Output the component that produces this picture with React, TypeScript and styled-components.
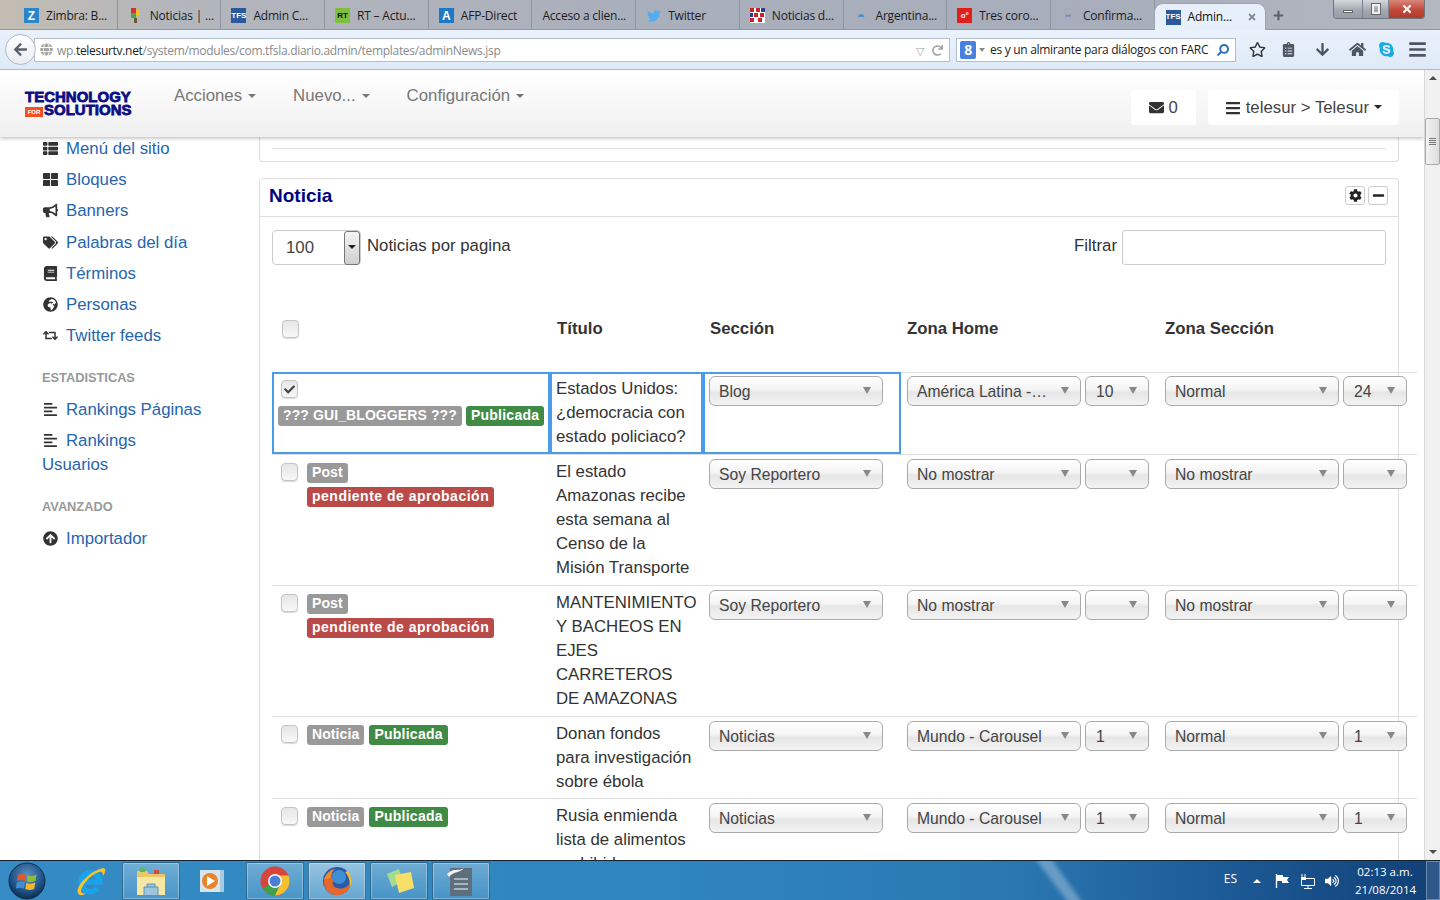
import React from "react";
import styled, { createGlobalStyle } from "styled-components";
import {
  FaThList,
  FaThLarge,
  FaBullhorn,
  FaTags,
  FaBook,
  FaGlobeAfrica,
  FaRetweet,
  FaAlignLeft,
  FaArrowCircleUp,
  FaEnvelope,
  FaCog,
  FaMinus,
  FaCheck,
  FaTwitter,
  FaRegStar,
  FaClipboardList,
  FaArrowDown,
  FaHome,
  FaSkype,
  FaBars,
  FaSearch,
  FaGlobe,
  FaArrowLeft,
  FaRedo,
  FaTimes,
  FaPlus,
  FaVolumeUp,
} from "react-icons/fa";

const GlobalStyle = createGlobalStyle`
  html, body {
    margin: 0;
    height: 100%;
    overflow: hidden;
    background: #fff;
  }
  * { box-sizing: border-box; }
`;

const Screen = styled.div`
  width: 1440px;
  height: 900px;
  display: flex;
  flex-direction: column;
  overflow: hidden;
  font-family: "Liberation Sans", Arial, sans-serif;
  font-size: 16.8px;
  line-height: 24px;
  color: #333;
`;

/* ---- browser chrome ---- */

const TabStrip = styled.div`
  height: 30px;
  flex: none;
  display: flex;
  padding-left: 14px;
  background: linear-gradient(90deg, #c3bdb2 0%, #b4b6bd 12%, #a9afbb 45%, #a7adba 75%, #b3b7c0 100%);
  border-bottom: 1px solid #8e9aaa;
  font-family: "Open Sans", "Noto Sans", sans-serif;
  font-size: 12px;
  letter-spacing: -0.2px;
`;

const Tab = styled.div`
  width: 103.7px;
  height: 29px;
  flex: none;
  display: flex;
  align-items: center;
  gap: 7px;
  padding: 2px 0 0 10px;
  color: #1c1c1c;
  white-space: nowrap;
  border-right: 1px solid #8f95a0;
`;

const ActiveTab = styled.div`
  width: 112px;
  height: 27px;
  margin: 3px 0 0 -1px;
  flex: none;
  display: flex;
  align-items: center;
  gap: 7px;
  padding: 0 0 0 11px;
  color: #111;
  background: #e6effa;
  border-radius: 9px 9px 0 0;
  border: 1px solid #98a2b0;
  border-bottom: none;
  position: relative;
  z-index: 1;
`;

const TabClose = styled.span`
  display: flex;
  margin-left: 8px;
  color: #7d8792;
  font-size: 10px;
`;

const NewTab = styled.span`
  display: flex;
  margin: 10px 0 0 7px;
  color: #59616d;
  font-size: 11px;
`;

const Favicon = styled.span<{ $bg: string; $fg?: string; $size?: number }>`
  width: 15px;
  height: 15px;
  flex: none;
  display: flex;
  align-items: center;
  justify-content: center;
  background: ${(p) => p.$bg};
  color: ${(p) => p.$fg || "#fff"};
  font-family: "Liberation Sans", sans-serif;
  font-size: ${(p) => p.$size || 8}px;
  line-height: 1;
  font-weight: 700;
  letter-spacing: 0;
`;

const BareIcon = styled.span<{ $color: string }>`
  width: 15px;
  height: 15px;
  flex: none;
  display: flex;
  align-items: center;
  justify-content: center;
  color: ${(p) => p.$color};
  font-size: 14px;
`;

const WindowControls = styled.div`
  margin-left: auto;
  margin-right: 15px;
  height: 19px;
  display: flex;
  border: 1px solid #6f7681;
  border-top: none;
  border-radius: 0 0 4px 4px;
  overflow: hidden;
`;

const WindowButton = styled.span<{ $w: number; $close?: boolean }>`
  width: ${(p) => p.$w}px;
  display: flex;
  align-items: center;
  justify-content: center;
  color: #f2f2f2;
  font-size: 12px;
  background: ${(p) =>
    p.$close
      ? "linear-gradient(#d9867b, #c14a3c 55%, #b5392e)"
      : "linear-gradient(#d5d8dd, #a4a9b2 55%, #969ca6)"};
  border-left: 1px solid #7d838d;
  &:first-child { border-left: none; }
`;

const MinGlyph = styled.i`
  width: 10px;
  height: 3px;
  margin-top: 5px;
  background: #f5f5f5;
  border: 1px solid #666;
`;

const RestoreGlyph = styled.i`
  width: 8px;
  height: 10px;
  background: transparent;
  border: 2px solid #f0f0f0;
  outline: 1px solid #666;
`;

const Toolbar = styled.div`
  height: 40px;
  flex: none;
  display: flex;
  align-items: center;
  padding-left: 5px;
  background: linear-gradient(#e9f1fb, #dfeaf8);
  border-bottom: 1px solid #a8bace;
  font-family: "Open Sans", "Noto Sans", sans-serif;
  font-size: 12px;
`;

const BackButton = styled.span`
  width: 31px;
  height: 31px;
  flex: none;
  display: flex;
  align-items: center;
  justify-content: center;
  border-radius: 50%;
  background: linear-gradient(#fff, #e8edf3);
  border: 1px solid #b0b8c2;
  color: #59616b;
  font-size: 15px;
  position: relative;
  z-index: 1;
`;

const UrlBar = styled.div`
  width: 916px;
  height: 24px;
  margin-left: -2px;
  flex: none;
  display: flex;
  align-items: center;
  padding: 2px 6px 0 5px;
  background: #fff;
  border: 1px solid #b5bfca;
  color: #8a8a8a;
  letter-spacing: -0.3px;
  white-space: pre;
`;

const UrlHost = styled.span`
  color: #1c1c1c;
`;

const UrlGlobe = styled.span`
  display: flex;
  margin: -2px 4px 0 0;
  color: #a5a5a5;
  font-size: 13px;
`;

const UrlEnd = styled.span`
  margin-left: auto;
  display: flex;
  align-items: center;
  gap: 8px;
  color: #9aa2ab;
  font-size: 11px;
`;

const SearchBar = styled.div`
  width: 280px;
  height: 24px;
  margin-left: 6px;
  flex: none;
  display: flex;
  align-items: center;
  background: #fff;
  border: 1px solid #b5bfca;
  padding-right: 6px;
  color: #222;
  white-space: pre;
  letter-spacing: -0.3px;
  overflow: hidden;
`;

const SearchEngine = styled.span`
  width: 16px;
  height: 18px;
  margin-left: 3px;
  flex: none;
  display: flex;
  align-items: center;
  justify-content: center;
  background: #4a80e0;
  color: #fff;
  border-radius: 2px;
  font-weight: 700;
  font-size: 14px;
`;

const SearchCaret = styled.span`
  width: 0;
  height: 0;
  margin: 0 5px 0 3px;
  border-left: 3px solid transparent;
  border-right: 3px solid transparent;
  border-top: 4px solid #8a8a8a;
`;

const SearchGlass = styled.span`
  margin-left: auto;
  display: flex;
  color: #2e6fc0;
  font-size: 12px;
  transform: scaleX(-1);
`;

const ToolIcons = styled.div`
  flex: 1;
  display: grid;
  grid-template-columns: 30px 30px 34px 36px 29px 32px;
  align-items: center;
  justify-items: end;
  color: #4e5660;
`;

const ToolIcon = styled.span<{ $color?: string; $size?: number }>`
  display: flex;
  color: ${(p) => p.$color || "inherit"};
  font-size: ${(p) => p.$size || 17}px;
`;

/* ---- page ---- */

const Viewport = styled.div`
  flex: 1;
  min-height: 0;
  display: flex;
`;

const Page = styled.div`
  flex: 1;
  min-width: 0;
  display: flex;
  flex-direction: column;
  overflow: hidden;
`;

const Scrollbar = styled.div`
  width: 16px;
  flex: none;
  display: flex;
  flex-direction: column;
  background: #f0f0f0;
  border-left: 1px solid #d8d8d8;
`;

const ScrollArrow = styled.div<{ $down?: boolean }>`
  height: 16px;
  flex: none;
  display: flex;
  align-items: center;
  justify-content: center;
  &::before {
    content: "";
    border-left: 4px solid transparent;
    border-right: 4px solid transparent;
    ${(p) => (p.$down ? "border-top: 4px solid #505050;" : "border-bottom: 4px solid #505050;")}
  }
`;

const ScrollThumb = styled.div`
  width: 15px;
  height: 47px;
  margin-top: 32px;
  flex: none;
  display: flex;
  flex-direction: column;
  align-items: center;
  justify-content: center;
  gap: 1px;
  background: linear-gradient(90deg, #f3f3f3, #dcdcdc);
  border: 1px solid #a8a8a8;
  border-radius: 2px;
  i {
    width: 7px;
    height: 1px;
    background: #777;
  }
`;

const ScrollSpace = styled.div`
  flex: 1;
`;

const Header = styled.header`
  height: 67px;
  flex: none;
  display: flex;
  padding: 0 25px;
  background: linear-gradient(#fff, #f0f0f0);
  box-shadow: 0 1px 4px rgba(0, 0, 0, 0.3);
  position: relative;
  z-index: 2;
`;

const Logo = styled.div`
  width: 107px;
  margin-top: 20px;
  flex: none;
  color: #0b0d85;
  font-weight: 700;
  font-size: 15px;
  line-height: 13px;
  -webkit-text-stroke: 0.8px #0b0d85;
  white-space: nowrap;
`;

const LogoFor = styled.span`
  display: inline-block;
  width: 18px;
  margin-right: 1px;
  vertical-align: 1px;
  background: #f4511e;
  color: #fff;
  font-size: 6px;
  line-height: 10px;
  text-align: center;
  -webkit-text-stroke: 0;
`;

const MainNav = styled.nav`
  display: flex;
  gap: 37px;
  margin: 14px 0 0 42px;
  color: #777;
`;

const NavItem = styled.span`
  display: flex;
  align-items: center;
  gap: 6px;
  height: 24px;
`;

const Caret = styled.i<{ $color?: string }>`
  width: 0;
  height: 0;
  margin-top: -1px;
  border-left: 4px solid transparent;
  border-right: 4px solid transparent;
  border-top: 4px solid ${(p) => p.$color || "#777"};
`;

const HeaderRight = styled.div`
  margin: 20px 0 0 auto;
  display: flex;
  gap: 12px;
`;

const HeaderBox = styled.div`
  height: 35px;
  min-width: 65px;
  display: flex;
  align-items: center;
  justify-content: center;
  gap: 5px;
  padding: 0 17px;
  background: #fff;
  border-radius: 4px;
  color: #444;
`;

const Body = styled.div`
  flex: 1;
  min-height: 0;
  display: flex;
`;

const Sidebar = styled.aside`
  width: 259px;
  flex: none;
  padding: 0 54px 0 42px;
`;

const SideLink = styled.div`
  margin-bottom: 7.2px;
  color: #2565ae;
`;

const SideIcon = styled.span`
  display: inline-block;
  width: 24px;
  height: 16px;
  padding-left: 1px;
  line-height: 16px;
  font-size: 15px;
  color: #333;
  vertical-align: -2px;
`;

const SideHeading = styled.div`
  height: 20px;
  line-height: 20px;
  margin: 20px 0 10px;
  color: #999;
  font-size: 12.8px;
  font-weight: 700;
`;

const Main = styled.main`
  width: 1140px;
  flex: none;
`;

const StubPanel = styled.div`
  height: 25px;
  padding: 11px 12px 0;
  background: #fff;
  border: 1px solid #ddd;
  border-top: none;
  border-radius: 0 0 4px 4px;
  margin-bottom: 16px;
`;

const StubLine = styled.hr`
  margin: 0;
  border: none;
  border-top: 1px solid #ddd;
`;

const Panel = styled.section`
  height: 900px;
  background: #fff;
  border: 1px solid #ddd;
  border-radius: 4px;
`;

const PanelHead = styled.div`
  height: 38px;
  display: flex;
  align-items: center;
  justify-content: space-between;
  padding: 0 10px 4px 9px;
  border-bottom: 1px solid #ddd;
`;

const PanelTitle = styled.h2`
  margin: 0;
  color: #000080;
  font-size: 19px;
  font-weight: 700;
`;

const PanelTools = styled.div`
  display: flex;
  gap: 3px;
`;

const PanelTool = styled.span`
  width: 20px;
  height: 19px;
  display: flex;
  align-items: center;
  justify-content: center;
  border: 1px solid #ccc;
  border-radius: 3px;
  color: #222;
  font-size: 13px;
`;

const ListControls = styled.div`
  display: flex;
  align-items: flex-start;
  margin: 13px 12px 25px;
`;

const PageSize = styled.div`
  width: 89px;
  height: 35px;
  display: flex;
  align-items: center;
  justify-content: space-between;
  padding-left: 13px;
  border: 1px solid #ccc;
  border-radius: 4px;
  color: #444;
  padding-top: 1px;
`;

const SpinButton = styled.span`
  width: 16px;
  height: 34px;
  display: flex;
  align-items: center;
  justify-content: center;
  background: linear-gradient(#f4f4f4, #cfcfcf);
  border: 1px solid #777;
  border-radius: 3px;
  margin-top: -1px;
`;

const ControlLabel = styled.span`
  margin: 4px 0 0 6px;
`;

const FilterBox = styled.input`
  width: 264px;
  height: 35px;
  margin-left: 5px;
  border: 1px solid #ccc;
  border-radius: 3px;
`;

const FilterLabel = styled(ControlLabel)`
  margin-left: auto;
`;

const NewsTable = styled.table`
  width: 1145px;
  margin-left: 12px;
  table-layout: fixed;
  border-collapse: separate;
  border-spacing: 0;
`;

const HeadCell = styled.th`
  height: 82px;
  padding: 27px 6px 0 7px;
  vertical-align: top;
  text-align: left;
  font-weight: 700;
  font-size: 16.8px;
  color: #333;
  &:first-child { padding-top: 26px; }
  &:nth-child(n + 4) { padding-left: 6px; }
`;

const Row = styled.tr<{ $top?: number; $bottom?: number }>`
  td {
    padding: ${(p) => p.$top ?? 4}px 6px ${(p) => p.$bottom ?? 5}px;
  }
`;

const Cell = styled.td<{ $selected?: boolean }>`
  vertical-align: top;
  border-top: 1px solid #ddd;
  ${(p) => p.$selected && "outline: 2px solid #4a9be9; outline-offset: -2px;"}
`;

const TitleLines = styled.div`
  margin: 1px 0 -1px;
`;

const CheckBox = styled.span`
  width: 17px;
  height: 18px;
  margin: 4px 0 0 3px;
  flex: none;
  display: flex;
  align-items: center;
  justify-content: center;
  background: linear-gradient(#e6e6e6, #f8f8f8);
  border: 1px solid #c4c4c4;
  border-radius: 4px;
  box-shadow: 0 1px 1px rgba(0, 0, 0, 0.15);
  color: #444;
  font-size: 11px;
`;

const StateCell = styled.div<{ $stacked?: boolean }>`
  display: flex;
  flex-direction: ${(p) => (p.$stacked ? "column" : "row")};
  gap: ${(p) => (p.$stacked ? "4px" : "9px")};
`;

const Badges = styled.div<{ $column?: boolean; $gap: number }>`
  display: flex;
  flex-direction: ${(p) => (p.$column ? "column" : "row")};
  align-items: flex-start;
  gap: ${(p) => p.$gap}px;
  margin-top: 4px;
`;

const Badge = styled.span<{ $tone: "gray" | "green" | "red" }>`
  height: 20px;
  padding: 0 5px;
  border-radius: 3px;
  white-space: nowrap;
  color: #fff;
  font-size: 14px;
  line-height: 19px;
  font-weight: 700;
  letter-spacing: ${(p) => ({ gray: 0.1, green: 0.25, red: 0.5 }[p.$tone])}px;
  background: ${(p) => ({ gray: "#999", green: "#3f8a45", red: "#b94a48" }[p.$tone])};
`;

const SelectPair = styled.div`
  display: flex;
  gap: 4px;
`;

const SelectBox = styled.div<{ $small?: boolean }>`
  width: ${(p) => (p.$small ? "64px" : "174px")};
  height: 30px;
  flex: none;
  display: flex;
  align-items: center;
  padding: 1px 11px 0 ${(p) => (p.$small ? 10 : 9)}px;
  background: linear-gradient(#fff 0%, #f4f4f4 45%, #e6e6e6 55%, #f3f3f3 100%);
  border: 1px solid #aaa;
  border-radius: 6px;
  color: #444;
  font-size: 15.7px;
  white-space: nowrap;
  &::after {
    content: "";
    margin-left: auto;
    flex: none;
    border-left: 4px solid transparent;
    border-right: 4px solid transparent;
    border-top: 7px solid #888;
    margin-top: -2px;
  }
`;

/* ---- windows taskbar ---- */

const Taskbar = styled.footer`
  height: 40px;
  flex: none;
  display: flex;
  align-items: center;
  padding-left: 8px;
  position: relative;
  overflow: hidden;
  color: #fff;
  font-family: "Open Sans", "Noto Sans", sans-serif;
  font-size: 12px;
  background: linear-gradient(90deg, #358cc4 0%, #2f86bf 45%, #2a78b2 70%, #1c5a96 85%, #123f76 100%);
  border-top: 1px solid #16222e;
`;

const Swoosh = styled.svg`
  position: absolute;
  left: 1020px;
  top: 0;
`;

const TaskSlot = styled.div<{ $open?: boolean; $w: number; $active?: boolean; $after?: number }>`
  width: ${(p) => p.$w}px;
  height: 38px;
  margin-right: ${(p) => p.$after ?? 4}px;
  flex: none;
  display: flex;
  align-items: center;
  justify-content: center;
  border-radius: 2px;
  ${(p) =>
    p.$open &&
    `border: 1px solid rgba(20, 60, 90, .55);
     box-shadow: inset 0 0 0 1px rgba(255,255,255,.3);
     background: linear-gradient(rgba(255,255,255,${p.$active ? 0.5 : 0.3}), rgba(255,255,255,${p.$active ? 0.25 : 0.1}));`}
`;

const Tray = styled.div`
  margin-left: auto;
  height: 100%;
  display: flex;
  align-items: center;
  position: relative;
`;

const TrayText = styled.span`
  margin-right: 16px;
  margin-top: -4px;
`;

const TrayIcon = styled.span<{ $gap?: number }>`
  display: flex;
  margin-right: ${(p) => p.$gap ?? 9}px;
  font-size: 14px;
`;

const TrayCaret = styled.i`
  margin-right: 13px;
  border-left: 4px solid transparent;
  border-right: 4px solid transparent;
  border-bottom: 4px solid #fff;
`;

const Clock = styled.div`
  width: 60px;
  margin-right: 11px;
  text-align: center;
  font-size: 11.5px;
  line-height: 18px;
  white-space: nowrap;
`;

const ShowDesktop = styled.div`
  width: 14px;
  height: 100%;
  border: 1px solid rgba(255, 255, 255, 0.3);
  background: rgba(255, 255, 255, 0.12);
`;

/* ---- drawings ---- */

const ChromeIcon = () => (
  <svg width="30" height="30" viewBox="0 0 30 30">
    <circle cx="15" cy="15" r="14.5" fill="#d9453a" />
    <path d="M15 15 L2.5 22.2 A14.5 14.5 0 0 0 15 29.5 L22 15 Z" fill="#3f9f4c" />
    <path d="M15 29.5 A14.5 14.5 0 0 0 28.5 9.5 L15 9.5 L22 15 Z" fill="#f3c12f" />
    <circle cx="15" cy="15" r="7" fill="#fff" />
    <circle cx="15" cy="15" r="5.5" fill="#4a80d8" />
  </svg>
);

const FirefoxIcon = () => (
  <svg width="32" height="32" viewBox="0 0 32 32">
    <circle cx="16" cy="16" r="14" fill="#2a5aa8" />
    <circle cx="18" cy="12" r="7" fill="#3f8fd4" />
    <path d="M3 15 C2 24 9 31 17 30 C25 30 30 23 30 15 C28 22 22 25 16 23 C12 22 10 18 13 15 C10 14 10 11 12 8 C7 9 4 11 3 15 Z" fill="#e5672a" />
    <path d="M3 15 C5 8 10 4 14 4 C11 7 9 10 10 13 C7 13 5 14 3 15 Z" fill="#f08a2a" />
    <path d="M27 6 C31 12 31 18 29 22 C29 16 28 11 24 7 Z" fill="#f5c02c" />
  </svg>
);

const WindowsOrb = () => (
  <svg width="38" height="38" viewBox="0 0 38 38">
    <defs>
      <radialGradient id="orb" cx="50%" cy="35%" r="65%">
        <stop offset="0" stopColor="#5d93c8" />
        <stop offset="0.7" stopColor="#1d4f84" />
        <stop offset="1" stopColor="#0d2c4c" />
      </radialGradient>
    </defs>
    <circle cx="19" cy="19" r="18" fill="url(#orb)" stroke="#0f2f4f" />
    <path d="M10 13 Q14 11 18 13 L17 19 Q13 17 9 19 Z" fill="#e2562e" />
    <path d="M19.5 13.5 Q24 15 28.5 12.5 L27.5 19 Q23 21 18.5 19.5 Z" fill="#8dbb3a" />
    <path d="M8.8 20.5 Q13 18.5 16.8 20.5 L15.8 26.5 Q12 24.8 8 26.5 Z" fill="#3e8fd6" />
    <path d="M18.3 21 Q23 22.5 27.2 20.5 L26.2 27 Q22 29 17.3 27 Z" fill="#f3b62f" />
  </svg>
);

const IeIcon = () => (
  <svg width="32" height="32" viewBox="0 0 32 32">
    <path d="M8 17 H25 A9.5 9.5 0 1 0 22.5 23.5" fill="none" stroke="#18a3ee" strokeWidth="5" />
    <path d="M3 28 C0 22 14 6 28 3 C31 3 31 7 28 11 C28 7 26 6 24 7 C14 10 6 22 6 26 C6 28 8 29 11 28 C8 31 4 31 3 28 Z" fill="#f2c230" />
  </svg>
);

const FolderIcon = () => (
  <svg width="32" height="30" viewBox="0 0 32 30">
    <path d="M2 5 H12 L14 8 H30 V29 H2 Z" fill="#e8c869" />
    <path d="M2 11 H30 V29 H2 Z" fill="#f7e7a6" />
    <rect x="5" y="2" width="5" height="4" fill="#5eb55e" />
    <rect x="19" y="4" width="5" height="4" fill="#c8503c" />
    <path d="M9 29 V21 H23 V29 M12 21 V18 H20 V21" fill="#9cc5de" stroke="#5f92b3" />
  </svg>
);

const MediaIcon = () => (
  <svg width="26" height="24" viewBox="0 0 26 24">
    <rect x="5" y="1" width="19" height="22" fill="#a9cbe2" />
    <rect x="0" y="1" width="20" height="22" fill="#d7e5ee" />
    <circle cx="10" cy="12" r="8" fill="#e9842a" />
    <path d="M7 7 L15 12 L7 17 Z" fill="#fff" />
  </svg>
);

const NotesIcon = () => (
  <svg width="32" height="28" viewBox="0 0 32 28">
    <path d="M4 7 L16 2 L20 14 L9 20 Z" fill="#a5dd8e" />
    <path d="M12 8 L28 5 L31 21 L16 26 Z" fill="#f7df6a" />
  </svg>
);

const WriterIcon = () => (
  <svg width="30" height="32" viewBox="0 0 30 32">
    <path d="M4 3 H26 V31 H4 Z" fill="#5d6e7c" />
    <path d="M1 9 C8 2 12 7 18 3 C14 8 8 6 3 12 Z" fill="#f4f4f4" />
    <path d="M8 14 H22 M8 19 H22 M8 24 H22" stroke="#a5b4bd" strokeWidth="2" />
  </svg>
);

const TrayFlag = () => (
  <svg width="16" height="16" viewBox="0 0 16 16">
    <path d="M2.5 1 V15" stroke="#fff" strokeWidth="1.4" />
    <path d="M3 2 H9 V4 H15 L13 7 L15 10 H8 V8 H3 Z" fill="#fff" />
  </svg>
);

const TrayNetwork = () => (
  <svg width="17" height="16" viewBox="0 0 17 16">
    <path d="M3 1 V5 M6 1 V5" stroke="#fff" />
    <rect x="2" y="4" width="5" height="3" fill="#fff" />
    <path d="M5 5.5 H15.5 V12.5 H2.5 V7" fill="none" stroke="#fff" />
    <path d="M9 13 V15 M5 15.5 H13" stroke="#fff" />
  </svg>
);

const MultiFavicon = () => (
  <svg width="15" height="15" viewBox="0 0 15 15">
    <rect x="3" y="0" width="5" height="5" fill="#d62f2f" />
    <rect x="8" y="2" width="4" height="5" fill="#f2c230" />
    <rect x="3" y="5" width="5" height="5" fill="#4ca64c" />
    <rect x="6" y="10" width="3" height="5" fill="#6b5a2e" />
  </svg>
);

const CheckeredFavicon = () => (
  <svg width="15" height="15" viewBox="0 0 15 15">
    <rect width="15" height="15" fill="#fff" />
    <path d="M0 0h4v4H0zM6 0h4v4H6zM4 5h4v4H4zM10 5h4v4h-4zM0 10h4v4H0zM8 10h4v4H8z" fill="#c8232c" />
    <path d="M11 0h4v4h-4zM0 5h3v4H0z" fill="#2d3e8c" />
  </svg>
);

const tabs: { label: string; icon: React.ReactNode }[] = [
  { label: "Zimbra: B...", icon: <Favicon $bg="#2b86c9" $size={12}>Z</Favicon> },
  { label: "Noticias | ...", icon: <MultiFavicon /> },
  { label: "Admin C...", icon: <Favicon $bg="#2a5a9c">TFS</Favicon> },
  { label: "RT – Actu...", icon: <Favicon $bg="#7dbf3f" $fg="#111">RT</Favicon> },
  { label: "AFP-Direct", icon: <Favicon $bg="#1f78c8" $size={12}>A</Favicon> },
  { label: "Acceso a clien...", icon: null },
  { label: "Twitter", icon: <BareIcon $color="#55acee"><FaTwitter /></BareIcon> },
  { label: "Noticias d...", icon: <CheckeredFavicon /> },
  { label: "Argentina...", icon: <BareIcon $color="#4a8fc9">◓</BareIcon> },
  { label: "Tres coro...", icon: <Favicon $bg="#e0201b">o°</Favicon> },
  { label: "Confirma...", icon: <Favicon $bg="transparent" $fg="#6a83b8">▪▪</Favicon> },
];

const menuTop = [
  { icon: <FaThList />, label: "Menú del sitio" },
  { icon: <FaThLarge />, label: "Bloques" },
  { icon: <FaBullhorn />, label: "Banners" },
  { icon: <FaTags />, label: "Palabras del día" },
  { icon: <FaBook />, label: "Términos" },
  { icon: <FaGlobeAfrica />, label: "Personas" },
  { icon: <FaRetweet />, label: "Twitter feeds" },
];

type Pick = { text?: string; order?: string };
type News = {
  kind: string;
  state: "Publicada" | "pendiente de aprobación";
  title: string[];
  section: string;
  home: Pick;
  zone: Pick;
  top?: number;
  bottom?: number;
  stacked?: boolean;
  column?: boolean;
  checked?: boolean;
};

const news: News[] = [
  {
    kind: "??? GUI_BLOGGERS ???",
    state: "Publicada",
    title: ["Estados Unidos:", "¿democracia con", "estado policiaco?"],
    section: "Blog",
    home: { text: "América Latina -…", order: "10" },
    zone: { text: "Normal", order: "24" },
    top: 3,
    bottom: 6,
    stacked: true,
    checked: true,
  },
  {
    kind: "Post",
    state: "pendiente de aprobación",
    title: ["El estado", "Amazonas recibe", "esta semana al", "Censo de la", "Misión Transporte"],
    section: "Soy Reportero",
    home: { text: "No mostrar" },
    zone: { text: "No mostrar" },
    bottom: 6,
    column: true,
  },
  {
    kind: "Post",
    state: "pendiente de aprobación",
    title: ["MANTENIMIENTO", "Y BACHEOS EN", "EJES", "CARRETEROS", "DE AMAZONAS"],
    section: "Soy Reportero",
    home: { text: "No mostrar" },
    zone: { text: "No mostrar" },
    bottom: 6,
    column: true,
  },
  {
    kind: "Noticia",
    state: "Publicada",
    title: ["Donan fondos", "para investigación", "sobre ébola"],
    section: "Noticias",
    home: { text: "Mundo - Carousel", order: "1" },
    zone: { text: "Normal", order: "1" },
  },
  {
    kind: "Noticia",
    state: "Publicada",
    title: ["Rusia enmienda", "lista de alimentos", "prohibidos"],
    section: "Noticias",
    home: { text: "Mundo - Carousel", order: "1" },
    zone: { text: "Normal", order: "1" },
  },
];

const PickPair = ({ pick }: { pick: Pick }) => (
  <SelectPair>
    <SelectBox>{pick.text}</SelectBox>
    <SelectBox $small>{pick.order}</SelectBox>
  </SelectPair>
);

const NewsRow = ({ item }: { item: News }) => (
  <Row $top={item.top} $bottom={item.bottom}>
    <Cell $selected={item.checked}>
      <StateCell $stacked={item.stacked}>
        <CheckBox>{item.checked && <FaCheck />}</CheckBox>
        <Badges $column={item.column} $gap={item.stacked || item.column ? 4 : 5}>
          <Badge $tone="gray">{item.kind}</Badge>
          <Badge $tone={item.state === "Publicada" ? "green" : "red"}>{item.state}</Badge>
        </Badges>
      </StateCell>
    </Cell>
    <Cell $selected={item.checked}>
      <TitleLines>
        {item.title.map((line) => (
          <div key={line}>{line}</div>
        ))}
      </TitleLines>
    </Cell>
    <Cell $selected={item.checked}>
      <SelectBox>{item.section}</SelectBox>
    </Cell>
    <Cell>
      <PickPair pick={item.home} />
    </Cell>
    <Cell>
      <PickPair pick={item.zone} />
    </Cell>
  </Row>
);

const App = () => (
  <Screen>
    <GlobalStyle />
    <TabStrip>
      {tabs.map((tab) => (
        <Tab key={tab.label}>
          {tab.icon}
          {tab.label}
        </Tab>
      ))}
      <ActiveTab>
        <Favicon $bg="#2a5a9c">TFS</Favicon>
        Admin...
        <TabClose>
          <FaTimes />
        </TabClose>
      </ActiveTab>
      <NewTab>
        <FaPlus />
      </NewTab>
      <WindowControls>
        <WindowButton $w={28}>
          <MinGlyph />
        </WindowButton>
        <WindowButton $w={26}>
          <RestoreGlyph />
        </WindowButton>
        <WindowButton $w={36} $close>
          <FaTimes />
        </WindowButton>
      </WindowControls>
    </TabStrip>

    <Toolbar>
      <BackButton>
        <FaArrowLeft />
      </BackButton>
      <UrlBar>
        <UrlGlobe>
          <FaGlobe />
        </UrlGlobe>
        wp.<UrlHost>telesurtv.net</UrlHost>/system/modules/com.tfsla.diario.admin/templates/adminNews.jsp
        <UrlEnd>
          ▽
          <FaRedo />
        </UrlEnd>
      </UrlBar>
      <SearchBar>
        <SearchEngine>8</SearchEngine>
        <SearchCaret />
        es y un almirante para diálogos con FARC
        <SearchGlass>
          <FaSearch />
        </SearchGlass>
      </SearchBar>
      <ToolIcons>
        <ToolIcon $color="#333">
          <FaRegStar />
        </ToolIcon>
        <ToolIcon $size={15}>
          <FaClipboardList />
        </ToolIcon>
        <ToolIcon $size={15}>
          <FaArrowDown />
        </ToolIcon>
        <ToolIcon>
          <FaHome />
        </ToolIcon>
        <ToolIcon $color="#19a9e6">
          <FaSkype />
        </ToolIcon>
        <ToolIcon $size={19}>
          <FaBars />
        </ToolIcon>
      </ToolIcons>
    </Toolbar>

    <Viewport>
      <Page>
        <Header>
          <Logo>
            TECHNOLOGY
            <br />
            <LogoFor>FOR</LogoFor>SOLUTIONS
          </Logo>
          <MainNav>
            <NavItem>
              Acciones <Caret />
            </NavItem>
            <NavItem>
              Nuevo... <Caret />
            </NavItem>
            <NavItem>
              Configuración <Caret />
            </NavItem>
          </MainNav>
          <HeaderRight>
            <HeaderBox>
              <FaEnvelope size={15} color="#333" />0
            </HeaderBox>
            <HeaderBox>
              <FaBars size={16} color="#333" />
              telesur &gt; Telesur
              <Caret $color="#222" />
            </HeaderBox>
          </HeaderRight>
        </Header>
        <Body>
          <Sidebar>
            {menuTop.map((link) => (
              <SideLink key={link.label}>
                <SideIcon>{link.icon}</SideIcon>
                {link.label}
              </SideLink>
            ))}
            <SideHeading>ESTADISTICAS</SideHeading>
            <SideLink>
              <SideIcon>
                <FaAlignLeft />
              </SideIcon>
              Rankings Páginas
            </SideLink>
            <SideLink>
              <SideIcon>
                <FaAlignLeft />
              </SideIcon>
              Rankings Usuarios
            </SideLink>
            <SideHeading>AVANZADO</SideHeading>
            <SideLink>
              <SideIcon>
                <FaArrowCircleUp />
              </SideIcon>
              Importador
            </SideLink>
          </Sidebar>
          <Main>
            <StubPanel>
              <StubLine />
            </StubPanel>
            <Panel>
              <PanelHead>
                <PanelTitle>Noticia</PanelTitle>
                <PanelTools>
                  <PanelTool>
                    <FaCog />
                  </PanelTool>
                  <PanelTool>
                    <FaMinus />
                  </PanelTool>
                </PanelTools>
              </PanelHead>
              <ListControls>
                <PageSize>
                  100
                  <SpinButton>
                    <Caret $color="#222" />
                  </SpinButton>
                </PageSize>
                <ControlLabel>Noticias por pagina</ControlLabel>
                <FilterLabel>Filtrar</FilterLabel>
                <FilterBox />
              </ListControls>
              <NewsTable>
                <colgroup>
                  <col width="278" />
                  <col width="153" />
                  <col width="198" />
                  <col width="258" />
                  <col width="258" />
                </colgroup>
                <thead>
                  <tr>
                    <HeadCell>
                      <CheckBox />
                    </HeadCell>
                    <HeadCell>Título</HeadCell>
                    <HeadCell>Sección</HeadCell>
                    <HeadCell>Zona Home</HeadCell>
                    <HeadCell>Zona Sección</HeadCell>
                  </tr>
                </thead>
                <tbody>
                  {news.map((item, i) => (
                    <NewsRow key={i} item={item} />
                  ))}
                </tbody>
              </NewsTable>
            </Panel>
          </Main>
        </Body>
      </Page>
      <Scrollbar>
        <ScrollArrow />
        <ScrollThumb>
          <i />
          <i />
          <i />
          <i />
        </ScrollThumb>
        <ScrollSpace />
        <ScrollArrow $down />
      </Scrollbar>
    </Viewport>

    <Taskbar>
      <Swoosh width="90" height="40" viewBox="0 0 90 40">
        <defs>
          <filter id="soft">
            <feGaussianBlur stdDeviation="2" />
          </filter>
        </defs>
        <path d="M14 -4 L30 -4 L64 44 L50 44 Z" fill="rgba(255,255,255,.3)" filter="url(#soft)" />
      </Swoosh>
      <TaskSlot $w={38} $after={17}>
        <WindowsOrb />
      </TaskSlot>
      <TaskSlot $w={55}>
        <IeIcon />
      </TaskSlot>
      <TaskSlot $w={58} $open>
        <FolderIcon />
      </TaskSlot>
      <TaskSlot $w={58}>
        <MediaIcon />
      </TaskSlot>
      <TaskSlot $w={58} $open>
        <ChromeIcon />
      </TaskSlot>
      <TaskSlot $w={58} $open $active>
        <FirefoxIcon />
      </TaskSlot>
      <TaskSlot $w={58} $open>
        <NotesIcon />
      </TaskSlot>
      <TaskSlot $w={58} $open>
        <WriterIcon />
      </TaskSlot>
      <Tray>
        <TrayText>ES</TrayText>
        <TrayCaret />
        <TrayIcon>
          <TrayFlag />
        </TrayIcon>
        <TrayIcon>
          <TrayNetwork />
        </TrayIcon>
        <TrayIcon $gap={16}>
          <FaVolumeUp />
        </TrayIcon>
        <Clock>
          02:13 a.m.
          <br />
          21/08/2014
        </Clock>
        <ShowDesktop />
      </Tray>
    </Taskbar>
  </Screen>
);

export default App;
